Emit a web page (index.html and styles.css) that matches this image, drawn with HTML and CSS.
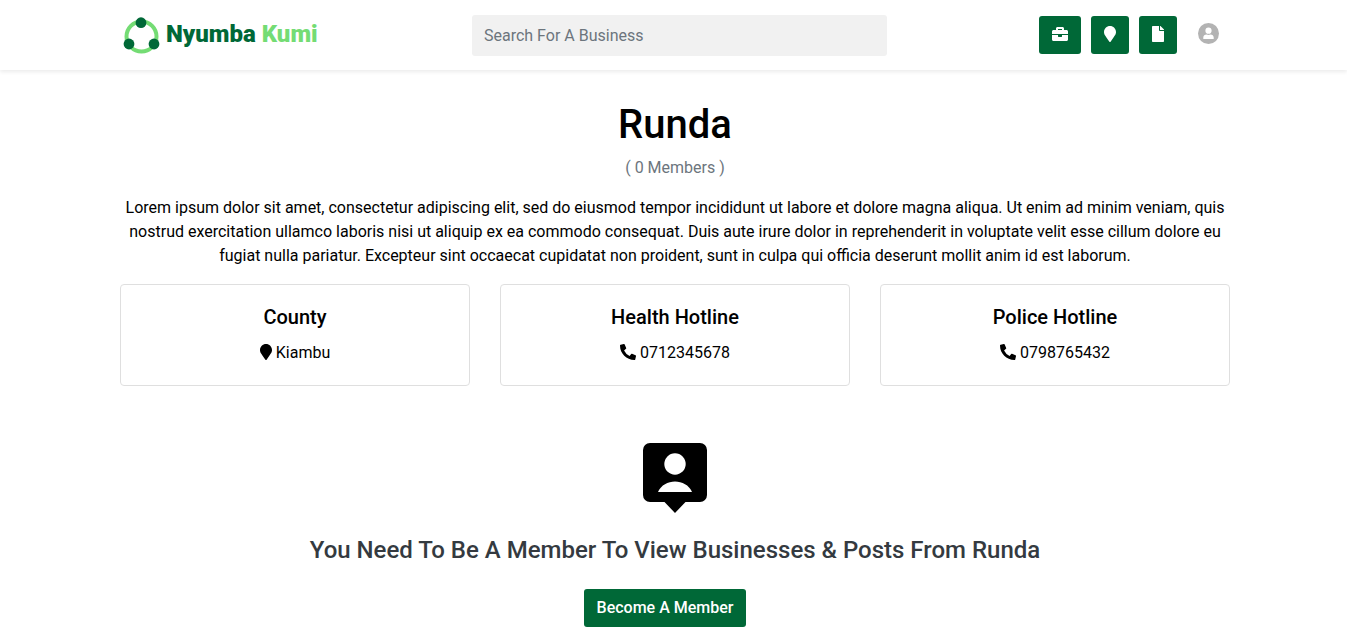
FILE: index.html
```html
<!DOCTYPE html>
<html lang="en">
<head>
<meta charset="utf-8">
<title>Runda | Nyumba Kumi</title>
<link rel="stylesheet" href="styles.css">
</head>
<body>
<header class="topbar">
  <div class="container topbar-inner">
    <a class="brand" href="#">
      <svg class="brand-mark" viewBox="0 0 36 36" aria-hidden="true">
        <circle cx="17.500" cy="19.500" r="15" fill="none" stroke="#74dc74" stroke-width="4"/>
        <g fill="#006837">
          <circle cx="17" cy="5.700" r="5.400"/>
          <circle cx="5" cy="27" r="5.400"/>
          <circle cx="30" cy="27" r="5.400"/>
        </g>
      </svg>
      <span class="brand-name">Nyumba <span class="brand-accent">Kumi</span></span>
    </a>
    <form class="search">
      <input class="search-input" type="search" placeholder="Search For A Business" aria-label="Search for a business">
    </form>
    <nav class="actions">
      <button class="btn" type="button" aria-label="Businesses"><svg class="icon icon-wide" viewBox="0 0 512 512"><path d="M320 336c0 8.840-7.160 16-16 16h-96c-8.840 0-16-7.160-16-16v-48H0v144c0 25.600 22.400 48 48 48h416c25.600 0 48-22.400 48-48V288H320v48zm144-208h-80V80c0-25.600-22.400-48-48-48H176c-25.600 0-48 22.400-48 48v48H48c-25.600 0-48 22.400-48 48v80h512v-80c0-25.600-22.400-48-48-48zm-144 0H192V96h128v32z"/></svg></button>
      <button class="btn" type="button" aria-label="Neighbourhoods"><svg class="icon" viewBox="0 0 384 512"><path d="M172.268 501.670C26.970 291.031 0 269.413 0 192 0 85.961 85.961 0 192 0s192 85.961 192 192c0 77.413-26.970 99.031-172.268 309.670-9.535 13.774-29.930 13.773-39.464 0z"/></svg></button>
      <button class="btn" type="button" aria-label="Posts"><svg class="icon" viewBox="0 0 384 512"><path d="M224 136V0H24C10.700 0 0 10.700 0 24v464c0 13.300 10.700 24 24 24h336c13.300 0 24-10.700 24-24V160H248c-13.200 0-24-10.800-24-24zm160-14.100v6.100H256V0h6.100c6.400 0 12.500 2.500 17 7l97.900 98c4.500 4.500 7 10.600 7 16.900z"/></svg></button>
      <button class="profile" type="button" aria-label="Profile"><svg class="profile-icon" viewBox="0 0 21 21"><circle cx="10.500" cy="10.500" r="10.500" fill="#b3b3b3"/><circle cx="10.500" cy="7.700" r="3.100" fill="#fff"/><path d="M5.300 16v-1.500c0-2 1.500-3 3.200-3a5 5 0 0 0 4 0c1.700 0 3.200 1 3.200 3V16z" fill="#fff"/></svg></button>
    </nav>
  </div>
</header>
<main class="container">
  <section class="intro">
    <h1 class="title">Runda</h1>
    <p class="members">( 0 Members )</p>
    <p class="description">Lorem ipsum dolor sit amet, consectetur adipiscing elit, sed do eiusmod tempor incididunt ut labore et dolore magna aliqua. Ut enim ad minim veniam, quis nostrud exercitation ullamco laboris nisi ut aliquip ex ea commodo consequat. Duis aute irure dolor in reprehenderit in voluptate velit esse cillum dolore eu fugiat nulla pariatur. Excepteur sint occaecat cupidatat non proident, sunt in culpa qui officia deserunt mollit anim id est laborum.</p>
  </section>
  <section class="cards">
    <article class="card">
      <h2 class="card-title">County</h2>
      <p class="card-text"><svg class="icon" viewBox="0 0 384 512"><path d="M172.268 501.670C26.970 291.031 0 269.413 0 192 0 85.961 85.961 0 192 0s192 85.961 192 192c0 77.413-26.970 99.031-172.268 309.670-9.535 13.774-29.930 13.773-39.464 0z"/></svg> Kiambu</p>
    </article>
    <article class="card">
      <h2 class="card-title">Health Hotline</h2>
      <p class="card-text"><svg class="icon icon-wide" viewBox="0 0 512 512"><path d="M497.390 361.800l-112-48a24 24 0 0 0-28 6.900l-49.600 60.600A370.660 370.660 0 0 1 130.600 204.110l60.600-49.600a23.940 23.940 0 0 0 6.900-28l-48-112A24.160 24.160 0 0 0 122.600.610l-104 24A24 24 0 0 0 0 48c0 256.500 207.900 464 464 464a24 24 0 0 0 23.400-18.600l24-104a24.290 24.290 0 0 0-14.010-27.600z"/></svg> 0712345678</p>
    </article>
    <article class="card">
      <h2 class="card-title">Police Hotline</h2>
      <p class="card-text"><svg class="icon icon-wide" viewBox="0 0 512 512"><path d="M497.390 361.800l-112-48a24 24 0 0 0-28 6.900l-49.600 60.600A370.660 370.660 0 0 1 130.600 204.110l60.600-49.600a23.940 23.940 0 0 0 6.900-28l-48-112A24.160 24.160 0 0 0 122.600.610l-104 24A24 24 0 0 0 0 48c0 256.500 207.900 464 464 464a24 24 0 0 0 23.400-18.600l24-104a24.290 24.290 0 0 0-14.010-27.600z"/></svg> 0798765432</p>
    </article>
  </section>
  <section class="join">
    <svg class="join-icon" viewBox="0 0 64 70" aria-hidden="true"><path d="M7 0h50a7 7 0 0 1 7 7v45a7 7 0 0 1-7 7H42.500L32 70 21.500 59H7a7 7 0 0 1-7-7V7a7 7 0 0 1 7-7z"/><circle cx="32" cy="21" r="10.700" fill="#fff"/><path d="M15 49c3-7 10-10.500 17-10.500S46 42 49 49z" fill="#fff"/></svg>
    <h2 class="join-title">You Need To Be A Member To View Businesses &amp; Posts From Runda</h2>
    <button class="btn join-btn" type="button">Become A Member</button>
  </section>
</main>
</body>
</html>
```
FILE: styles.css
```css
* { box-sizing: border-box; }
body {
  margin: 0;
  background: #fff;
  color: #000;
  font: 400 16px/24px Roboto, sans-serif;
}
h1, h2, p { margin: 0; }
.container {
  max-width: 1113px;
  margin: 0 auto;
  padding-left: 3px;
}
.topbar { box-shadow: 0 2px 4px rgba(0, 0, 0, 0.08); }
.topbar-inner {
  display: grid;
  grid-template-columns: 352px minmax(0, 415px) 1fr;
  align-items: center;
  height: 70px;
}
.brand {
  display: flex;
  align-items: center;
  gap: 6px;
  padding-left: 4px;
  color: #006837;
  text-decoration: none;
}
.brand-mark { width: 36px; height: 36px; overflow: visible; }
.brand-name { padding-bottom: 2px; font-size: 24px; font-weight: 900; white-space: nowrap; }
.brand-accent { color: #74dc74; }
.search-input {
  display: block;
  width: 100%;
  height: 41px;
  padding: 0 12px;
  border: 0;
  border-radius: 3px;
  background: #f1f1f1;
  font: inherit;
}
.search-input::placeholder { color: #6c757d; opacity: 1; }
.actions {
  display: flex;
  justify-content: flex-end;
  align-items: center;
  gap: 10px;
  padding-right: 11px;
}
.btn {
  height: 38px;
  padding: 0 13px;
  border: 0;
  border-radius: 3px;
  background: #006837;
  color: #fff;
  font: 500 16px/24px Roboto, sans-serif;
}
.icon { width: 12px; height: 16px; fill: currentColor; vertical-align: -2px; }
.icon-wide { width: 16px; }
.profile {
  display: flex;
  padding: 0 0 4px;
  margin-left: 11px;
  border: 0;
  background: none;
}
.profile-icon { width: 21px; height: 21px; }
.intro { padding-top: 31px; text-align: center; }
.title { font-size: 40px; line-height: 48px; font-weight: 500; }
.members { margin-top: 7px; color: #6c757d; }
.description { margin-top: 16px; }
.cards {
  display: grid;
  grid-template-columns: repeat(3, 1fr);
  gap: 30px;
  margin-top: 16px;
}
.card {
  padding: 20px;
  border: 1px solid #dfdfdf;
  border-radius: 4px;
  text-align: center;
}
.card-title { margin-bottom: 12px; font-size: 20px; line-height: 24px; font-weight: 500; }
.join { padding: 57px 0 4px; text-align: center; }
.join-icon { display: block; width: 64px; height: 70px; margin: 0 auto 23px; }
.join-title { color: #343a40; font-size: 24px; line-height: 29px; font-weight: 500; }
.join-btn { margin: 24px 20px 0 0; }
```
